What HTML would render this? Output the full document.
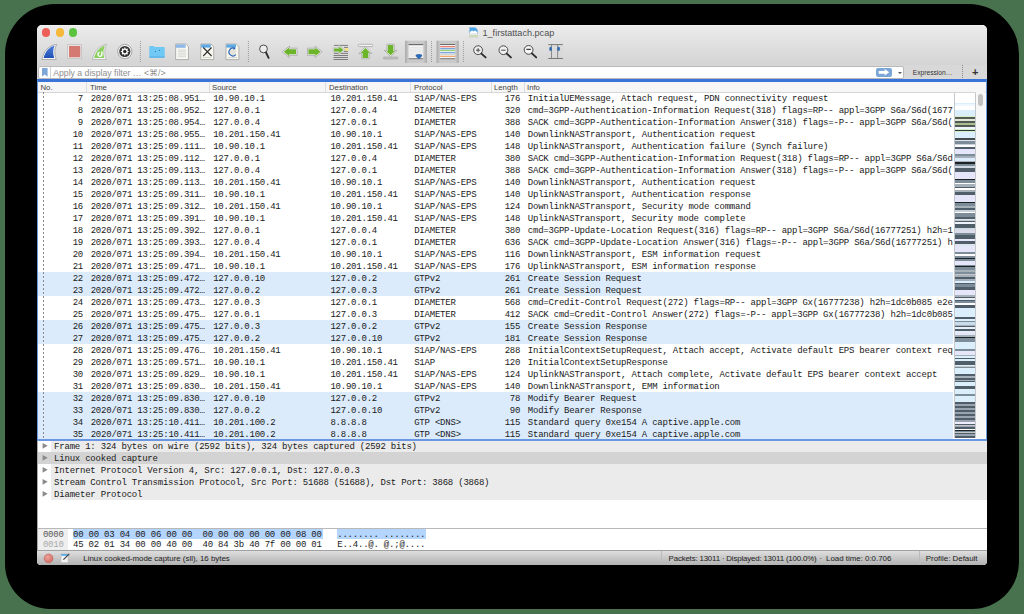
<!DOCTYPE html>
<html><head><meta charset="utf-8"><style>
*{margin:0;padding:0;box-sizing:border-box}
html,body{width:1024px;height:614px;overflow:hidden;background:#48724e;font-family:"Liberation Sans",sans-serif}
#shadow{position:absolute;left:4.6px;top:4px;width:1014px;height:605px;background:#000;border-radius:50px 50px 47px 45px}
#win{position:absolute;left:37px;top:25px;width:950px;height:540px;background:#fff;border-radius:5px 5px 4px 4px;overflow:hidden}
#titlebar{position:absolute;left:0;top:0;width:950px;height:41px;background:linear-gradient(#ebebeb,#d4d4d4);border-bottom:1px solid #b5b5b5;border-top:1px solid #f3f3f3}
.tl{position:absolute;top:3.4px;width:8.2px;height:8.2px;border-radius:50%}
#title{position:absolute;left:432px;top:1px;height:14px;font-size:9.1px;line-height:14px;color:#505050;white-space:nowrap}
.ficon{display:inline-block;width:8px;height:10px;vertical-align:-2px;margin-right:5px;background:linear-gradient(#58a8e8 0,#58a8e8 55%,#dcdcdc 55%,#dcdcdc 100%);border:1px solid #c8c8c8}
#filterbar{position:absolute;left:0;top:40px;width:950px;height:14px;background:#d8d8d8}
#finput{position:absolute;left:1px;top:41px;width:866px;height:12.5px;background:#fff;border:1px solid #b9b9b9;border-radius:2px}
#bm{position:absolute;left:2.8px;top:0.8px;width:5.8px;height:9px;background:#7ea7d8;clip-path:polygon(0 0,100% 0,100% 100%,50% 75%,0 100%)}
#fsep{position:absolute;left:11.2px;top:0;width:1px;height:10.5px;background:#d0d0d0}
#ph{position:absolute;left:14.2px;top:-0.3px;font-size:8.7px;line-height:12px;color:#8e8e8e;white-space:nowrap}
#apply{position:absolute;left:837px;top:0.8px;width:15.6px;height:9px;background:#7aa6d8;border-radius:2px}
#apply svg{position:absolute;left:0;top:0}
#dd{position:absolute;left:859px;top:4.5px;width:0;height:0;border-left:2.5px solid transparent;border-right:2.5px solid transparent;border-top:2.5px solid #555}
#expr{position:absolute;left:875.7px;top:42px;font-size:6.7px;line-height:11px;color:#333;white-space:nowrap}
#exsep{position:absolute;left:925px;top:40px;width:1px;height:13px;border-left:1px dotted #888}
#plus{position:absolute;left:935px;top:40px;font-size:11px;line-height:14px;font-weight:bold;color:#333}
#focus{position:absolute;left:0;top:54px;width:950px;height:362px;border:solid #6a96e2;border-top-color:#3b74d8;border-width:3px 1.5px 2px 1.5px;pointer-events:none;z-index:5}
#plist{position:absolute;left:0;top:54px;width:950px;height:362px;background:#fff}
#phead{position:absolute;left:0;top:3px;width:950px;height:11px;background:#f6f6f6;border-bottom:1px solid #d6d6d6}
.h{position:absolute;top:0.5px;font-size:7.75px;line-height:10px;color:#444;white-space:nowrap}
.hs{position:absolute;top:0;width:1px;height:10px;background:#dedede}
#rows{position:absolute;left:0;top:67px;width:916px;height:348px;overflow:hidden}
.r{position:absolute;left:0;width:916px;height:12px;font-family:"Liberation Mono",monospace;font-size:9px;letter-spacing:-0.22px;line-height:14px;color:#1a1a1a;white-space:pre}
.r.b{background:#dbebfb}
.r span{position:absolute;top:0}
.cno{right:870px;text-align:right}
.ct{left:53.7px}
.cs{left:176.2px}
.cd{left:293.4px}
.cp{left:377.2px}
.cl{right:432.8px;text-align:right}
.ci{left:490.8px}
#treeline{position:absolute;left:6px;top:67px;width:1px;height:348px;background:repeating-linear-gradient(#8a8a8a 0,#8a8a8a 2px,transparent 2px,transparent 4px)}
#mm{position:absolute;left:916.5px;top:68px;width:22px;height:345px;background:#c4c8cc;overflow:hidden}
#sbar{position:absolute;left:939px;top:67px;width:9px;height:348px;background:#f7f7f7}
#thumb{position:absolute;left:2px;top:1.5px;width:5px;height:12px;background:#c2c2c2;border-radius:3px}
#details{position:absolute;left:0;top:415px;width:950px;height:88px;background:#fff;border-left:1px solid #aaa}
.dr{position:absolute;left:0;width:950px;height:12px;background:linear-gradient(90deg,#fff 0,#fff 13px,#ebebeb 13px)}
.dr.sel{background:#d3d3d3}
.tri{position:absolute;left:0;top:0;width:14px;height:12px}
.dt{position:absolute;left:16.1px;top:0.7px;font-family:"Liberation Mono",monospace;font-size:9px;letter-spacing:-0.22px;line-height:12px;color:#1a1a1a;white-space:pre}
#hexsep{position:absolute;left:0;top:502.8px;width:950px;height:1.2px;background:#b8b8b8}
#hex{position:absolute;left:0;top:503.5px;width:950px;height:21.5px;background:#fff;border-left:1px solid #aaa}
#hexoff{position:absolute;left:0;top:0;width:30px;height:21.5px;background:#efefef}
.hx{position:absolute;left:0;height:10px;width:950px;font-family:"Liberation Mono",monospace;font-size:9px;letter-spacing:-0.22px;line-height:10px;color:#1a1a1a;white-space:pre}
.off{position:absolute;left:4.9px;top:0;color:#5a5a5a}
.hb{position:absolute;left:35px;top:0}
.hl{position:absolute;top:0.6px;height:9.7px;background:#b4d5fe}
#status{position:absolute;left:0;top:525px;width:950px;height:15px;background:linear-gradient(#dedede,#b2b2b2);border-top:1px solid #a0a0a0}
#serr{position:absolute;left:7px;top:3px;width:9px;height:9px;border-radius:50%;background:#e06060;border:1px solid #b04040}
#sedit{position:absolute;left:24px;top:2px;width:9px;height:10px;background:#fff;border:1px solid #999}
.st{position:absolute;top:0.8px;font-size:7.9px;line-height:14px;color:#222;white-space:nowrap}
.ssep{position:absolute;top:0;width:1px;height:14px;background:#bbb}

</style></head><body>
<div id="shadow"></div>
<div id="win">
<div id="titlebar"></div>
<div class="tl" style="left:5.3px;background:#ed5f57"></div>
<div class="tl" style="left:18.9px;background:#f5b83a"></div>
<div class="tl" style="left:32.2px;background:#5bc33f"></div>
<div id="title"><svg width="9" height="11" viewBox="0 0 9 11" style="vertical-align:-2px;margin-right:4.5px"><path d="M0.3,0.3 H6.3 L8.7,2.7 V10.7 H0.3Z" fill="#e8e8e8" stroke="#c4c4c4" stroke-width="0.5"/><path d="M0.5,0.5 H6.2 L8.5,2.8 V6 H0.5Z" fill="#4ea6ea"/><path d="M1,5 L3,3.4 L4.5,4.6 L6,3.6 L8,5 V6 H1Z" fill="#fff"/><rect x="0.5" y="8.6" width="8" height="0.8" fill="#9ccc6a"/></svg>1_firstattach.pcap</div>
<svg id="tb" width="1024" height="614" viewBox="0 0 1024 614" style="position:absolute;left:-37px;top:-25px;pointer-events:none">
<defs>
<linearGradient id="gblue" x1="0" y1="0" x2="0" y2="1"><stop offset="0" stop-color="#4f7fdc"/><stop offset="1" stop-color="#1f4fb5"/></linearGradient>
<linearGradient id="gbtn" x1="0" y1="0" x2="1" y2="0"><stop offset="0" stop-color="#a9a9a9"/><stop offset="0.15" stop-color="#c9c9c9"/><stop offset="0.85" stop-color="#c9c9c9"/><stop offset="1" stop-color="#a9a9a9"/></linearGradient>
</defs>
<!-- shark fin start -->
<path d="M41.9,59.5 C43.5,51 48.5,45.5 56.8,44.2 C54.3,49 54.2,54 56.3,59.5 Z" fill="#f4f4f4" stroke="#a0a0a0" stroke-width="0.8"/>
<path d="M43.6,58 C45.5,51 49.5,47 54.6,45.6 C52.8,49.5 52.7,54 54.2,58 Z" fill="url(#gblue)"/>
<!-- stop -->
<rect x="67.6" y="44.6" width="14" height="14" fill="#ececec" stroke="#c0c0c0" stroke-width="0.8"/>
<rect x="69" y="45.9" width="11.3" height="11.4" fill="#d57a72"/>
<!-- restart fin -->
<path d="M92.4,59.5 C94,51 99,45.7 106.6,44.4 C104.3,49 104.2,54 106.3,59.5 Z" fill="#f4f4f4" stroke="#b0b0b0" stroke-width="0.8"/>
<path d="M94,58 C96,51 100,47 104.9,45.8 C103,49.5 103,54 104.3,58 Z" fill="#8ccf5e"/>
<path d="M101.8,51.5 v3.5 a2,2 0 1 1 -2.2,-2.6" fill="none" stroke="#fff" stroke-width="1.4"/>
<!-- options gear -->
<circle cx="124.8" cy="51.5" r="7.1" fill="#f6f6f6" stroke="#8a8a8a" stroke-width="0.7"/>
<circle cx="124.8" cy="51.5" r="5.6" fill="#333"/>
<circle cx="124.8" cy="51.5" r="3" fill="#fff"/>
<g stroke="#fff" stroke-width="1.1"><path d="M124.8,47.6 V55.4 M120.9,51.5 H128.7"/><path d="M122.05,48.75 L127.55,54.25 M127.55,48.75 L122.05,54.25"/></g>
<circle cx="124.8" cy="51.5" r="1.7" fill="#2a2a2a"/>
<!-- separators -->
<g stroke="#8a8a8a" stroke-width="0.9" stroke-dasharray="0.9 1.1">
<line x1="140.4" y1="41" x2="140.4" y2="62"/><line x1="248.4" y1="41" x2="248.4" y2="62"/>
<line x1="431.5" y1="41" x2="431.5" y2="62"/><line x1="463.4" y1="41" x2="463.4" y2="62"/>
</g>
<!-- open folder -->
<path d="M149.3,47 v-0.3 a0.8,0.8 0 0 1 0.8,-0.8 h3.6 l0.8,1.1 h9.4 a0.8,0.8 0 0 1 0.8,0.8 v9.2 a0.7,0.7 0 0 1 -0.7,0.7 h-14 a0.7,0.7 0 0 1 -0.7,-0.7 z" fill="#70c8f4"/>
<path d="M149.3,56.3 h15.3 v0.8 a0.7,0.7 0 0 1 -0.7,0.7 h-14 a0.7,0.7 0 0 1 -0.7,-0.7z" fill="#5cb5e8"/>
<circle cx="155.4" cy="51.4" r="0.6" fill="#3a7ab0"/><circle cx="159.4" cy="50.4" r="0.6" fill="#3a7ab0"/>
<!-- doc (open recent/save) -->
<path d="M175.6,44 h10.2 l2.7,2.7 v12.9 h-12.9 z" fill="#f7f7f2" stroke="#9a9a9a" stroke-width="0.7"/>
<rect x="176" y="44.4" width="9.6" height="3.4" fill="#8fb8e8"/>
<g stroke="#c4c4c4" stroke-width="0.6"><line x1="178" y1="50" x2="186" y2="50"/><line x1="178" y1="51.5" x2="186" y2="51.5"/><line x1="178" y1="53.4" x2="186" y2="53.4"/><line x1="178" y1="55" x2="186" y2="55"/><line x1="178" y1="56.6" x2="186" y2="56.6"/></g>
<!-- close doc -->
<path d="M200.8,44 h10.2 l2.7,2.7 v12.9 h-12.9 z" fill="#f7f7ee" stroke="#9a9a9a" stroke-width="0.7"/>
<rect x="201.2" y="44.4" width="9.6" height="3.2" fill="#5aa8e4"/>
<g stroke="#bbb" stroke-width="0.6"><line x1="203" y1="57.5" x2="211" y2="57.5"/></g>
<path d="M203.2,47.5 L211.6,56 M211.6,47.5 L203.2,56" stroke="#2e2e2e" stroke-width="1.1"/>
<!-- reload doc -->
<path d="M226,44 h10.2 l2.7,2.7 v12.9 h-12.9 z" fill="#f7f7ee" stroke="#9a9a9a" stroke-width="0.7"/>
<rect x="226.4" y="44.4" width="9.6" height="3.2" fill="#5aa8e4"/>
<g stroke="#bbb" stroke-width="0.6"><line x1="228" y1="57.5" x2="237" y2="57.5"/><line x1="231" y1="49.5" x2="231" y2="55"/><line x1="233" y1="49.5" x2="233" y2="55"/><line x1="235" y1="49.5" x2="235" y2="55"/></g>
<path d="M235.8,54.6 A3.9,3.9 0 1 1 234.5,48.4" fill="none" stroke="#2a62b0" stroke-width="1.2"/>
<path d="M233.2,47 l2.5,1.2 -2.1,1.8z" fill="#2a62b0"/>
<!-- find -->
<circle cx="263.5" cy="48.9" r="3.9" fill="#ededed" stroke="#3a3a3a" stroke-width="0.9"/>
<line x1="266" y1="52.5" x2="268.6" y2="57.8" stroke="#2e2e2e" stroke-width="1.9" stroke-linecap="round"/>
<!-- back arrow -->
<path d="M282.2,51.8 L289.4,46 V48.2 H297 V55.3 H289.4 V57.6 Z" fill="#f4f4f4" stroke="#a0a0a0" stroke-width="0.75"/>
<path d="M283.8,51.8 L289,47.6 V49.2 H296 V54.3 H289 V56 Z" fill="#6cb42a"/>
<!-- forward arrow -->
<path d="M322.2,51.8 L315,46 V48.2 H307.4 V55.3 H315 V57.6 Z" fill="#f4f4f4" stroke="#a0a0a0" stroke-width="0.75"/>
<path d="M320.6,51.8 L315.4,47.6 V49.2 H308.4 V54.3 H315.4 V56 Z" fill="#6cb42a"/>
<!-- jump to -->
<g stroke="#4a4a4a" stroke-width="0.65"><line x1="334" y1="45.4" x2="348" y2="45.4"/><line x1="344" y1="47.4" x2="348" y2="47.4"/><line x1="344" y1="51.4" x2="348" y2="51.4"/><line x1="334" y1="53.4" x2="348" y2="53.4"/><line x1="333.5" y1="55.5" x2="348" y2="55.5"/><line x1="333.5" y1="57.5" x2="348" y2="57.5"/><line x1="333.5" y1="59.5" x2="348" y2="59.5"/></g>
<rect x="345" y="48.2" width="3.2" height="2.6" fill="#f8e27a"/>
<path d="M333.2,47.8 H338.5 V44.8 L344.6,50 L338.5,55.2 V52.2 H333.2 Z" fill="#f4f4f4" stroke="#a8a8a8" stroke-width="0.6"/><path d="M334,48.6 H339.2 V46.6 L343.4,50 L339.2,53.4 V51.4 H334 Z" fill="#6cb42a"/>
<!-- first packet -->
<rect x="358.3" y="44.3" width="14.4" height="2.3" rx="1.1" fill="#f6f6f6" stroke="#9a9a9a" stroke-width="0.7"/>
<path d="M365.4,46.6 L372,53.6 H369.2 V58.8 H361.7 V53.6 H358.9 Z" fill="#f4f4f4" stroke="#9c9c9c" stroke-width="0.7"/>
<path d="M365.4,47.9 L370.2,53 H368.3 V58 H362.6 V53 H360.7 Z" fill="#6cb42a"/>
<!-- last packet -->
<path d="M386.9,44.2 H394.2 V50.4 H396.9 L390.6,56.6 L384.3,50.4 H386.9 Z" fill="#f4f4f4" stroke="#9c9c9c" stroke-width="0.7"/>
<path d="M387.8,45 H393.3 V51 H395 L390.6,55.3 L386.2,51 H387.8 Z" fill="#6cb42a"/>
<rect x="383.4" y="57.1" width="14.6" height="1.9" rx="0.9" fill="#c8c8c8" stroke="#9a9a9a" stroke-width="0.6"/>
<!-- autoscroll pressed -->
<rect x="405" y="40.7" width="22" height="22.2" fill="url(#gbtn)"/>
<rect x="408.6" y="45.5" width="14.6" height="13" fill="#f2f2f2"/>
<g stroke="#d8d8d8" stroke-width="0.6"><line x1="409" y1="47.8" x2="423" y2="47.8"/><line x1="409" y1="50" x2="423" y2="50"/><line x1="409" y1="52" x2="423" y2="52"/><line x1="409" y1="54.2" x2="423" y2="54.2"/><line x1="409" y1="56.2" x2="423" y2="56.2"/></g>
<rect x="408.6" y="44" width="14.6" height="1" fill="#6a6a6a"/>
<rect x="408.6" y="58.2" width="14.6" height="1" fill="#7a7a7a"/>
<path d="M415.6,55.8 a3.3,1.8 0 0 1 6.6,0 l-1.4,1.6 -1.9,1.9 -1.9,-1.9z" fill="#2e6bb4"/>
<!-- colorize pressed -->
<rect x="436.5" y="40.7" width="22.3" height="22.2" fill="url(#gbtn)"/>
<rect x="440.2" y="45" width="14.9" height="13.5" fill="#f4f4f4"/>
<rect x="440.2" y="44" width="14.9" height="1" fill="#6a6a6a"/>
<rect x="440.2" y="46" width="14.9" height="1.3" fill="#e77f70"/>
<rect x="440.2" y="48" width="14.9" height="1.3" fill="#7aa6e0"/>
<rect x="440.2" y="49.8" width="14.9" height="1.3" fill="#92d07a"/>
<rect x="440.2" y="52" width="14.9" height="1.3" fill="#7aa6e0"/>
<rect x="440.2" y="53.8" width="14.9" height="1" fill="#cfcfcf"/>
<rect x="440.2" y="55.7" width="14.9" height="1.3" fill="#f0aa70"/>
<rect x="440.2" y="58.2" width="14.9" height="1" fill="#7a7a7a"/>
<!-- zoom in -->
<circle cx="478.1" cy="50.2" r="4.4" fill="#efefef" stroke="#3a3a3a" stroke-width="0.9"/>
<path d="M476,50.2 h4.2 M478.1,48.1 v4.2" stroke="#3a3a3a" stroke-width="0.9"/>
<line x1="481.4" y1="53.6" x2="485.6" y2="57.4" stroke="#2a2a2a" stroke-width="1.9" stroke-linecap="round"/>
<!-- zoom out -->
<circle cx="503.4" cy="50.2" r="4.4" fill="#efefef" stroke="#3a3a3a" stroke-width="0.9"/>
<path d="M501.2,50.2 h4.4" stroke="#3a3a3a" stroke-width="0.9"/>
<line x1="506.7" y1="53.6" x2="510.9" y2="57.4" stroke="#2a2a2a" stroke-width="1.9" stroke-linecap="round"/>
<!-- zoom normal -->
<circle cx="528.6" cy="49.9" r="4.4" fill="#efefef" stroke="#3a3a3a" stroke-width="0.9"/>
<circle cx="528.6" cy="49.9" r="3" fill="#fafafa"/>
<path d="M526.4,49.4 h4.4" stroke="#3a3a3a" stroke-width="1.4"/>
<line x1="531.9" y1="53.4" x2="536.2" y2="57.4" stroke="#2a2a2a" stroke-width="1.9" stroke-linecap="round"/>
<!-- resize columns -->
<g stroke="#d4d4d4" stroke-width="0.6"><line x1="548.5" y1="46.5" x2="562.6" y2="46.5"/><line x1="548.5" y1="48.6" x2="562.6" y2="48.6"/><line x1="548.5" y1="50.6" x2="562.6" y2="50.6"/><line x1="548.5" y1="52.6" x2="562.6" y2="52.6"/><line x1="548.5" y1="54.6" x2="562.6" y2="54.6"/><line x1="548.5" y1="56.6" x2="562.6" y2="56.6"/></g>
<rect x="548.3" y="44.1" width="14.6" height="1" fill="#777"/>
<rect x="548.3" y="58" width="14.6" height="1" fill="#777"/>
<rect x="551.2" y="44.5" width="0.8" height="14" fill="#777"/>
<rect x="557.3" y="44.5" width="0.8" height="14" fill="#777"/>
<ellipse cx="550.6" cy="48.9" rx="1.35" ry="2.1" fill="#2e6bb4"/><ellipse cx="558.6" cy="48.9" rx="1.35" ry="2.1" fill="#2e6bb4"/>
</svg>

<div id="filterbar"></div>
<div id="finput"><div id="bm"></div><div id="fsep"></div><span id="ph">Apply a display filter … &lt;⌘/&gt;</span>
<div id="apply"><svg width="16" height="9" viewBox="0 0 16 9"><path d="M2.7,2.9 H8.6 V1.1 L13.2,4.3 L8.6,7.5 V5.8 H2.7z" fill="#fff"/></svg></div><div id="dd"></div></div>
<div id="expr">Expression…</div><div id="exsep"></div><div id="plus">+</div>
<div id="plist">
<div id="phead"><span class="h" style="left:3.5px">No.</span><span class="hs" style="left:49px"></span><span class="h" style="left:53px">Time</span><span class="hs" style="left:172px"></span><span class="h" style="left:175px">Source</span><span class="hs" style="left:288px"></span><span class="h" style="left:292px">Destination</span><span class="hs" style="left:373px"></span><span class="h" style="left:377px">Protocol</span><span class="hs" style="left:454px"></span><span class="h" style="left:457px">Length</span><span class="hs" style="left:487px"></span><span class="h" style="left:490px">Info</span></div>
</div>
<div id="rows">
<div class="r" style="top:0px"><span class="cno">7</span><span class="ct">2020/071 13:25:08.951…</span><span class="cs">10.90.10.1</span><span class="cd">10.201.150.41</span><span class="cp">S1AP/NAS-EPS</span><span class="cl">176</span><span class="ci">InitialUEMessage, Attach request, PDN connectivity request</span></div><div class="r" style="top:12px"><span class="cno">8</span><span class="ct">2020/071 13:25:08.952…</span><span class="cs">127.0.0.1</span><span class="cd">127.0.0.4</span><span class="cp">DIAMETER</span><span class="cl">320</span><span class="ci">cmd=3GPP-Authentication-Information Request(318) flags=RP-- appl=3GPP S6a/S6d(16777251) h2h=</span></div><div class="r" style="top:24px"><span class="cno">9</span><span class="ct">2020/071 13:25:08.954…</span><span class="cs">127.0.0.4</span><span class="cd">127.0.0.1</span><span class="cp">DIAMETER</span><span class="cl">388</span><span class="ci">SACK cmd=3GPP-Authentication-Information Answer(318) flags=-P-- appl=3GPP S6a/S6d(16777251)</span></div><div class="r" style="top:36px"><span class="cno">10</span><span class="ct">2020/071 13:25:08.955…</span><span class="cs">10.201.150.41</span><span class="cd">10.90.10.1</span><span class="cp">S1AP/NAS-EPS</span><span class="cl">140</span><span class="ci">DownlinkNASTransport, Authentication request</span></div><div class="r" style="top:48px"><span class="cno">11</span><span class="ct">2020/071 13:25:09.111…</span><span class="cs">10.90.10.1</span><span class="cd">10.201.150.41</span><span class="cp">S1AP/NAS-EPS</span><span class="cl">148</span><span class="ci">UplinkNASTransport, Authentication failure (Synch failure)</span></div><div class="r" style="top:60px"><span class="cno">12</span><span class="ct">2020/071 13:25:09.112…</span><span class="cs">127.0.0.1</span><span class="cd">127.0.0.4</span><span class="cp">DIAMETER</span><span class="cl">380</span><span class="ci">SACK cmd=3GPP-Authentication-Information Request(318) flags=RP-- appl=3GPP S6a/S6d(16777251)</span></div><div class="r" style="top:72px"><span class="cno">13</span><span class="ct">2020/071 13:25:09.113…</span><span class="cs">127.0.0.4</span><span class="cd">127.0.0.1</span><span class="cp">DIAMETER</span><span class="cl">388</span><span class="ci">SACK cmd=3GPP-Authentication-Information Answer(318) flags=-P-- appl=3GPP S6a/S6d(16777251)</span></div><div class="r" style="top:84px"><span class="cno">14</span><span class="ct">2020/071 13:25:09.113…</span><span class="cs">10.201.150.41</span><span class="cd">10.90.10.1</span><span class="cp">S1AP/NAS-EPS</span><span class="cl">140</span><span class="ci">DownlinkNASTransport, Authentication request</span></div><div class="r" style="top:96px"><span class="cno">15</span><span class="ct">2020/071 13:25:09.311…</span><span class="cs">10.90.10.1</span><span class="cd">10.201.150.41</span><span class="cp">S1AP/NAS-EPS</span><span class="cl">140</span><span class="ci">UplinkNASTransport, Authentication response</span></div><div class="r" style="top:108px"><span class="cno">16</span><span class="ct">2020/071 13:25:09.312…</span><span class="cs">10.201.150.41</span><span class="cd">10.90.10.1</span><span class="cp">S1AP/NAS-EPS</span><span class="cl">124</span><span class="ci">DownlinkNASTransport, Security mode command</span></div><div class="r" style="top:120px"><span class="cno">17</span><span class="ct">2020/071 13:25:09.391…</span><span class="cs">10.90.10.1</span><span class="cd">10.201.150.41</span><span class="cp">S1AP/NAS-EPS</span><span class="cl">148</span><span class="ci">UplinkNASTransport, Security mode complete</span></div><div class="r" style="top:132px"><span class="cno">18</span><span class="ct">2020/071 13:25:09.392…</span><span class="cs">127.0.0.1</span><span class="cd">127.0.0.4</span><span class="cp">DIAMETER</span><span class="cl">380</span><span class="ci">cmd=3GPP-Update-Location Request(316) flags=RP-- appl=3GPP S6a/S6d(16777251) h2h=1dc0b085</span></div><div class="r" style="top:144px"><span class="cno">19</span><span class="ct">2020/071 13:25:09.393…</span><span class="cs">127.0.0.4</span><span class="cd">127.0.0.1</span><span class="cp">DIAMETER</span><span class="cl">636</span><span class="ci">SACK cmd=3GPP-Update-Location Answer(316) flags=-P-- appl=3GPP S6a/S6d(16777251) h2h=1dc0b085</span></div><div class="r" style="top:156px"><span class="cno">20</span><span class="ct">2020/071 13:25:09.394…</span><span class="cs">10.201.150.41</span><span class="cd">10.90.10.1</span><span class="cp">S1AP/NAS-EPS</span><span class="cl">116</span><span class="ci">DownlinkNASTransport, ESM information request</span></div><div class="r" style="top:168px"><span class="cno">21</span><span class="ct">2020/071 13:25:09.471…</span><span class="cs">10.90.10.1</span><span class="cd">10.201.150.41</span><span class="cp">S1AP/NAS-EPS</span><span class="cl">176</span><span class="ci">UplinkNASTransport, ESM information response</span></div><div class="r b" style="top:180px"><span class="cno">22</span><span class="ct">2020/071 13:25:09.472…</span><span class="cs">127.0.0.10</span><span class="cd">127.0.0.2</span><span class="cp">GTPv2</span><span class="cl">261</span><span class="ci">Create Session Request</span></div><div class="r b" style="top:192px"><span class="cno">23</span><span class="ct">2020/071 13:25:09.472…</span><span class="cs">127.0.0.2</span><span class="cd">127.0.0.3</span><span class="cp">GTPv2</span><span class="cl">261</span><span class="ci">Create Session Request</span></div><div class="r" style="top:204px"><span class="cno">24</span><span class="ct">2020/071 13:25:09.473…</span><span class="cs">127.0.0.3</span><span class="cd">127.0.0.1</span><span class="cp">DIAMETER</span><span class="cl">568</span><span class="ci">cmd=Credit-Control Request(272) flags=RP-- appl=3GPP Gx(16777238) h2h=1dc0b085 e2e=</span></div><div class="r" style="top:216px"><span class="cno">25</span><span class="ct">2020/071 13:25:09.475…</span><span class="cs">127.0.0.1</span><span class="cd">127.0.0.3</span><span class="cp">DIAMETER</span><span class="cl">412</span><span class="ci">SACK cmd=Credit-Control Answer(272) flags=-P-- appl=3GPP Gx(16777238) h2h=1dc0b085 e2e=</span></div><div class="r b" style="top:228px"><span class="cno">26</span><span class="ct">2020/071 13:25:09.475…</span><span class="cs">127.0.0.3</span><span class="cd">127.0.0.2</span><span class="cp">GTPv2</span><span class="cl">155</span><span class="ci">Create Session Response</span></div><div class="r b" style="top:240px"><span class="cno">27</span><span class="ct">2020/071 13:25:09.475…</span><span class="cs">127.0.0.2</span><span class="cd">127.0.0.10</span><span class="cp">GTPv2</span><span class="cl">181</span><span class="ci">Create Session Response</span></div><div class="r" style="top:252px"><span class="cno">28</span><span class="ct">2020/071 13:25:09.476…</span><span class="cs">10.201.150.41</span><span class="cd">10.90.10.1</span><span class="cp">S1AP/NAS-EPS</span><span class="cl">288</span><span class="ci">InitialContextSetupRequest, Attach accept, Activate default EPS bearer context request</span></div><div class="r" style="top:264px"><span class="cno">29</span><span class="ct">2020/071 13:25:09.571…</span><span class="cs">10.90.10.1</span><span class="cd">10.201.150.41</span><span class="cp">S1AP</span><span class="cl">120</span><span class="ci">InitialContextSetupResponse</span></div><div class="r" style="top:276px"><span class="cno">30</span><span class="ct">2020/071 13:25:09.829…</span><span class="cs">10.90.10.1</span><span class="cd">10.201.150.41</span><span class="cp">S1AP/NAS-EPS</span><span class="cl">124</span><span class="ci">UplinkNASTransport, Attach complete, Activate default EPS bearer context accept</span></div><div class="r" style="top:288px"><span class="cno">31</span><span class="ct">2020/071 13:25:09.830…</span><span class="cs">10.201.150.41</span><span class="cd">10.90.10.1</span><span class="cp">S1AP/NAS-EPS</span><span class="cl">140</span><span class="ci">DownlinkNASTransport, EMM information</span></div><div class="r b" style="top:300px"><span class="cno">32</span><span class="ct">2020/071 13:25:09.830…</span><span class="cs">127.0.0.10</span><span class="cd">127.0.0.2</span><span class="cp">GTPv2</span><span class="cl">78</span><span class="ci">Modify Bearer Request</span></div><div class="r b" style="top:312px"><span class="cno">33</span><span class="ct">2020/071 13:25:09.830…</span><span class="cs">127.0.0.2</span><span class="cd">127.0.0.10</span><span class="cp">GTPv2</span><span class="cl">90</span><span class="ci">Modify Bearer Response</span></div><div class="r b" style="top:324px"><span class="cno">34</span><span class="ct">2020/071 13:25:10.411…</span><span class="cs">10.201.100.2</span><span class="cd">8.8.8.8</span><span class="cp">GTP &lt;DNS&gt;</span><span class="cl">115</span><span class="ci">Standard query 0xe154 A captive.apple.com</span></div><div class="r b" style="top:336px"><span class="cno">35</span><span class="ct">2020/071 13:25:10.411…</span><span class="cs">10.201.100.2</span><span class="cd">8.8.8.8</span><span class="cp">GTP &lt;DNS&gt;</span><span class="cl">115</span><span class="ci">Standard query 0xe154 A captive.apple.com</span></div>
</div>
<div id="treeline"></div>
<div id="mm"><div style="position:absolute;left:1px;width:20px;top:0.0px;height:9.7px;background:#ffffff"></div><div style="position:absolute;left:1px;width:20px;top:9.7px;height:1.0px;background:#daeefc"></div><div style="position:absolute;left:1px;width:20px;top:10.7px;height:2.3px;background:#eef6fe"></div><div style="position:absolute;left:1px;width:20px;top:13.0px;height:3.5px;background:#ffffff"></div><div style="position:absolute;left:1px;width:20px;top:16.5px;height:6.9px;background:#daeefc"></div><div style="position:absolute;left:1px;width:20px;top:23.4px;height:1.0px;background:#d8ecc8"></div><div style="position:absolute;left:1px;width:20px;top:24.4px;height:1.4px;background:#555a55"></div><div style="position:absolute;left:1px;width:20px;top:25.8px;height:2.0px;background:#e0e8d8"></div><div style="position:absolute;left:1px;width:20px;top:27.8px;height:1.9px;background:#555a55"></div><div style="position:absolute;left:1px;width:20px;top:29.7px;height:2.5px;background:#a9bf92"></div><div style="position:absolute;left:1px;width:20px;top:32.2px;height:1.5px;background:#555a55"></div><div style="position:absolute;left:1px;width:20px;top:33.7px;height:1.9px;background:#eef6fe"></div><div style="position:absolute;left:1px;width:20px;top:35.6px;height:1.0px;background:#d8ecc8"></div><div style="position:absolute;left:1px;width:20px;top:36.6px;height:1.4px;background:#2c3a3a"></div><div style="position:absolute;left:1px;width:20px;top:38.0px;height:1.0px;background:#d8ecc8"></div><div style="position:absolute;left:1px;width:20px;top:39.0px;height:5.9px;background:#daeefc"></div><div style="position:absolute;left:1px;width:20px;top:44.9px;height:2.0px;background:#444c50"></div><div style="position:absolute;left:1px;width:20px;top:46.9px;height:0.9px;background:#dde6ee"></div><div style="position:absolute;left:1px;width:20px;top:47.8px;height:3.0px;background:#7d8c99"></div><div style="position:absolute;left:1px;width:20px;top:50.8px;height:1.2px;background:#c8d2da"></div><div style="position:absolute;left:1px;width:20px;top:52.0px;height:1.7px;background:#ffffff"></div><div style="position:absolute;left:1px;width:20px;top:53.7px;height:2.7px;background:#4f5e69"></div><div style="position:absolute;left:1px;width:20px;top:56.4px;height:4.4px;background:#e6e6fa"></div><div style="position:absolute;left:1px;width:20px;top:60.8px;height:2.0px;background:#7d8c99"></div><div style="position:absolute;left:1px;width:20px;top:62.8px;height:1.9px;background:#a6b0b8"></div><div style="position:absolute;left:1px;width:20px;top:64.7px;height:2.9px;background:#dcecfa"></div><div style="position:absolute;left:1px;width:20px;top:67.6px;height:1.5px;background:#a6b0b8"></div><div style="position:absolute;left:1px;width:20px;top:69.1px;height:1.9px;background:#1c2226"></div><div style="position:absolute;left:1px;width:20px;top:71.0px;height:2.0px;background:#7d8c99"></div><div style="position:absolute;left:1px;width:20px;top:73.0px;height:1.5px;background:#d0dae2"></div><div style="position:absolute;left:1px;width:20px;top:74.5px;height:4.4px;background:#4f5e69"></div><div style="position:absolute;left:1px;width:20px;top:78.9px;height:6.8px;background:#e6e6fa"></div><div style="position:absolute;left:1px;width:20px;top:85.7px;height:1.5px;background:#1c2226"></div><div style="position:absolute;left:1px;width:20px;top:87.2px;height:2.9px;background:#7d8c99"></div><div style="position:absolute;left:1px;width:20px;top:90.1px;height:0.9px;background:#ffffff"></div><div style="position:absolute;left:1px;width:20px;top:91.0px;height:2.5px;background:#a6b0b8"></div><div style="position:absolute;left:1px;width:20px;top:93.5px;height:1.5px;background:#4f5e69"></div><div style="position:absolute;left:1px;width:20px;top:95.0px;height:2.0px;background:#ffffff"></div><div style="position:absolute;left:1px;width:20px;top:97.0px;height:2.0px;background:#a6b0b8"></div><div style="position:absolute;left:1px;width:20px;top:99.0px;height:3.0px;background:#4f5e69"></div><div style="position:absolute;left:1px;width:20px;top:102.0px;height:6.7px;background:#e6e6fa"></div><div style="position:absolute;left:1px;width:20px;top:108.7px;height:1.5px;background:#1c2226"></div><div style="position:absolute;left:1px;width:20px;top:110.2px;height:2.7px;background:#7d8c99"></div><div style="position:absolute;left:1px;width:20px;top:112.9px;height:1.9px;background:#a6b0b8"></div><div style="position:absolute;left:1px;width:20px;top:114.8px;height:2.0px;background:#4f5e69"></div><div style="position:absolute;left:1px;width:20px;top:116.8px;height:1.9px;background:#c8d2da"></div><div style="position:absolute;left:1px;width:20px;top:118.7px;height:1.5px;background:#ffffff"></div><div style="position:absolute;left:1px;width:20px;top:120.2px;height:3.4px;background:#7d8c99"></div><div style="position:absolute;left:1px;width:20px;top:123.6px;height:2.0px;background:#4f5e69"></div><div style="position:absolute;left:1px;width:20px;top:125.6px;height:1.9px;background:#d8e2ea"></div><div style="position:absolute;left:1px;width:20px;top:127.5px;height:1.5px;background:#4f5e69"></div><div style="position:absolute;left:1px;width:20px;top:129.0px;height:2.0px;background:#eef2fa"></div><div style="position:absolute;left:1px;width:20px;top:131.0px;height:4.3px;background:#4f5e69"></div><div style="position:absolute;left:1px;width:20px;top:135.3px;height:2.0px;background:#d0dae2"></div><div style="position:absolute;left:1px;width:20px;top:137.3px;height:2.9px;background:#dcdcec"></div><div style="position:absolute;left:1px;width:20px;top:140.2px;height:1.5px;background:#7d8c99"></div><div style="position:absolute;left:1px;width:20px;top:141.7px;height:3.9px;background:#4f5e69"></div><div style="position:absolute;left:1px;width:20px;top:145.6px;height:2.4px;background:#e6e6fa"></div><div style="position:absolute;left:1px;width:20px;top:148.0px;height:3.0px;background:#4f5e69"></div><div style="position:absolute;left:1px;width:20px;top:151.0px;height:2.0px;background:#dde6ee"></div><div style="position:absolute;left:1px;width:20px;top:153.0px;height:5.8px;background:#e6e6fa"></div><div style="position:absolute;left:1px;width:20px;top:158.8px;height:2.0px;background:#7d8c99"></div><div style="position:absolute;left:1px;width:20px;top:160.8px;height:1.9px;background:#ffffff"></div><div style="position:absolute;left:1px;width:20px;top:162.7px;height:2.0px;background:#7d8c99"></div><div style="position:absolute;left:1px;width:20px;top:164.7px;height:1.7px;background:#1c2226"></div><div style="position:absolute;left:1px;width:20px;top:166.4px;height:1.5px;background:#7d8c99"></div><div style="position:absolute;left:1px;width:20px;top:167.9px;height:3.9px;background:#e6e6fa"></div><div style="position:absolute;left:1px;width:20px;top:171.8px;height:1.0px;background:#7d8c99"></div><div style="position:absolute;left:1px;width:20px;top:172.8px;height:1.4px;background:#1c2226"></div><div style="position:absolute;left:1px;width:20px;top:174.2px;height:2.5px;background:#7d8c99"></div><div style="position:absolute;left:1px;width:20px;top:176.7px;height:2.4px;background:#a6b0b8"></div><div style="position:absolute;left:1px;width:20px;top:179.1px;height:2.4px;background:#7d8c99"></div><div style="position:absolute;left:1px;width:20px;top:181.5px;height:2.0px;background:#a6b0b8"></div><div style="position:absolute;left:1px;width:20px;top:183.5px;height:2.5px;background:#4f5e69"></div><div style="position:absolute;left:1px;width:20px;top:186.0px;height:2.0px;background:#a6b0b8"></div><div style="position:absolute;left:1px;width:20px;top:188.0px;height:1.9px;background:#daeefc"></div><div style="position:absolute;left:1px;width:20px;top:189.9px;height:1.4px;background:#4f5e69"></div><div style="position:absolute;left:1px;width:20px;top:191.3px;height:3.0px;background:#7d8c99"></div><div style="position:absolute;left:1px;width:20px;top:194.3px;height:2.4px;background:#4f5e69"></div><div style="position:absolute;left:1px;width:20px;top:196.7px;height:5.3px;background:#e6e6fa"></div><div style="position:absolute;left:1px;width:20px;top:202.0px;height:1.5px;background:#a6b0b8"></div><div style="position:absolute;left:1px;width:20px;top:203.5px;height:1.5px;background:#4f5e69"></div><div style="position:absolute;left:1px;width:20px;top:205.0px;height:1.5px;background:#e6ecf4"></div><div style="position:absolute;left:1px;width:20px;top:206.5px;height:1.5px;background:#4f5e69"></div><div style="position:absolute;left:1px;width:20px;top:208.0px;height:1.9px;background:#7d8c99"></div><div style="position:absolute;left:1px;width:20px;top:209.9px;height:2.0px;background:#ffffff"></div><div style="position:absolute;left:1px;width:20px;top:211.9px;height:2.9px;background:#4f5e69"></div><div style="position:absolute;left:1px;width:20px;top:214.8px;height:9.0px;background:#daeefc"></div><div style="position:absolute;left:1px;width:20px;top:223.8px;height:2.0px;background:#4f5e69"></div><div style="position:absolute;left:1px;width:20px;top:225.8px;height:2.0px;background:#daeefc"></div><div style="position:absolute;left:1px;width:20px;top:227.8px;height:1.4px;background:#7d8c99"></div><div style="position:absolute;left:1px;width:20px;top:229.2px;height:2.5px;background:#c8dcec"></div><div style="position:absolute;left:1px;width:20px;top:231.7px;height:0.9px;background:#a6b0b8"></div><div style="position:absolute;left:1px;width:20px;top:232.6px;height:1.5px;background:#4f5e69"></div><div style="position:absolute;left:1px;width:20px;top:234.1px;height:1.9px;background:#e6f0fa"></div><div style="position:absolute;left:1px;width:20px;top:236.0px;height:2.0px;background:#4f5e69"></div><div style="position:absolute;left:1px;width:20px;top:238.0px;height:2.0px;background:#e6ecf6"></div><div style="position:absolute;left:1px;width:20px;top:240.0px;height:2.4px;background:#e6e6fa"></div><div style="position:absolute;left:1px;width:20px;top:242.4px;height:1.5px;background:#a6b0b8"></div><div style="position:absolute;left:1px;width:20px;top:243.9px;height:1.4px;background:#1c2226"></div><div style="position:absolute;left:1px;width:20px;top:245.3px;height:3.5px;background:#7d8c99"></div><div style="position:absolute;left:1px;width:20px;top:248.8px;height:7.3px;background:#daeefc"></div><div style="position:absolute;left:1px;width:20px;top:256.1px;height:1.5px;background:#7d8c99"></div><div style="position:absolute;left:1px;width:20px;top:257.6px;height:4.4px;background:#e6e6fa"></div><div style="position:absolute;left:1px;width:20px;top:262.0px;height:1.4px;background:#a6b0b8"></div><div style="position:absolute;left:1px;width:20px;top:263.4px;height:1.5px;background:#daeefc"></div><div style="position:absolute;left:1px;width:20px;top:264.9px;height:1.0px;background:#4f5e69"></div><div style="position:absolute;left:1px;width:20px;top:265.9px;height:2.4px;background:#daeefc"></div><div style="position:absolute;left:1px;width:20px;top:268.3px;height:3.4px;background:#4f5e69"></div><div style="position:absolute;left:1px;width:20px;top:271.7px;height:1.8px;background:#daeefc"></div><div style="position:absolute;left:1px;width:20px;top:273.5px;height:1.5px;background:#7d8c99"></div><div style="position:absolute;left:1px;width:20px;top:275.0px;height:6.3px;background:#daeefc"></div><div style="position:absolute;left:1px;width:20px;top:281.3px;height:1.7px;background:#4f5e69"></div><div style="position:absolute;left:1px;width:20px;top:283.0px;height:1.5px;background:#a6b0b8"></div><div style="position:absolute;left:1px;width:20px;top:284.5px;height:2.0px;background:#4f5e69"></div><div style="position:absolute;left:1px;width:20px;top:286.5px;height:1.0px;background:#a6b0b8"></div><div style="position:absolute;left:1px;width:20px;top:287.5px;height:1.1px;background:#4f5e69"></div><div style="position:absolute;left:1px;width:20px;top:288.6px;height:4.4px;background:#daeefc"></div><div style="position:absolute;left:1px;width:20px;top:293.0px;height:3.0px;background:#4f5e69"></div><div style="position:absolute;left:1px;width:20px;top:296.0px;height:4.8px;background:#daeefc"></div><div style="position:absolute;left:1px;width:20px;top:300.8px;height:2.0px;background:#7d8c99"></div><div style="position:absolute;left:1px;width:20px;top:302.8px;height:5.9px;background:#daeefc"></div><div style="position:absolute;left:1px;width:20px;top:308.7px;height:2.0px;background:#4f5e69"></div><div style="position:absolute;left:1px;width:20px;top:310.7px;height:2.0px;background:#9aa4b0"></div><div style="position:absolute;left:1px;width:20px;top:312.7px;height:2.0px;background:#4f5e69"></div><div style="position:absolute;left:1px;width:20px;top:314.7px;height:2.0px;background:#9aa4b0"></div><div style="position:absolute;left:1px;width:20px;top:316.7px;height:2.0px;background:#4f5e69"></div><div style="position:absolute;left:1px;width:20px;top:318.7px;height:2.0px;background:#9aa4b0"></div><div style="position:absolute;left:1px;width:20px;top:320.7px;height:2.0px;background:#4f5e69"></div><div style="position:absolute;left:1px;width:20px;top:322.7px;height:2.0px;background:#9aa4b0"></div><div style="position:absolute;left:1px;width:20px;top:324.7px;height:2.0px;background:#4f5e69"></div><div style="position:absolute;left:1px;width:20px;top:326.7px;height:2.0px;background:#9aa4b0"></div><div style="position:absolute;left:1px;width:20px;top:328.7px;height:0.3px;background:#4f5e69"></div><div style="position:absolute;left:1px;width:20px;top:329.0px;height:1.8px;background:#eeeefc"></div><div style="position:absolute;left:1px;width:20px;top:330.8px;height:1.7px;background:#4f5e69"></div><div style="position:absolute;left:1px;width:20px;top:332.5px;height:1.5px;background:#9aa4b0"></div><div style="position:absolute;left:1px;width:20px;top:334.0px;height:2.0px;background:#4f5e69"></div><div style="position:absolute;left:1px;width:20px;top:336.0px;height:1.0px;background:#ffffff"></div><div style="position:absolute;left:1px;width:20px;top:337.0px;height:0.8px;background:#1c2226"></div><div style="position:absolute;left:1px;width:20px;top:337.8px;height:1.7px;background:#7d8c99"></div><div style="position:absolute;left:1px;width:20px;top:339.5px;height:1.8px;background:#4f5e69"></div><div style="position:absolute;left:1px;width:20px;top:341.3px;height:1.7px;background:#9aa4b0"></div><div style="position:absolute;left:1px;width:20px;top:343.0px;height:2.0px;background:#4f5e69"></div></div>
<div id="sbar"><div id="thumb"></div></div>
<div id="focus"></div>
<div id="details">
<div class="dr" style="top:0"><svg class="tri" viewBox="0 0 14 12"><path d="M4.6,3 L9.7,5.85 L4.6,8.7z" fill="#8a8a8a"/></svg><span class="dt">Frame 1: 324 bytes on wire (2592 bits), 324 bytes captured (2592 bits)</span></div>
<div class="dr sel" style="top:12px"><svg class="tri" viewBox="0 0 14 12"><path d="M4.6,3 L9.7,5.85 L4.6,8.7z" fill="#8a8a8a"/></svg><span class="dt">Linux cooked capture</span></div>
<div class="dr" style="top:24px"><svg class="tri" viewBox="0 0 14 12"><path d="M4.6,3 L9.7,5.85 L4.6,8.7z" fill="#8a8a8a"/></svg><span class="dt">Internet Protocol Version 4, Src: 127.0.0.1, Dst: 127.0.0.3</span></div>
<div class="dr" style="top:36px"><svg class="tri" viewBox="0 0 14 12"><path d="M4.6,3 L9.7,5.85 L4.6,8.7z" fill="#8a8a8a"/></svg><span class="dt">Stream Control Transmission Protocol, Src Port: 51688 (51688), Dst Port: 3868 (3868)</span></div>
<div class="dr" style="top:48px"><svg class="tri" viewBox="0 0 14 12"><path d="M4.6,3 L9.7,5.85 L4.6,8.7z" fill="#8a8a8a"/></svg><span class="dt">Diameter Protocol</span></div>
</div>
<div id="hexsep"></div>
<div id="hex">
<div id="hexoff"></div>
<div class="hl" style="left:35px;width:249.5px"></div><div class="hl" style="left:299px;width:88.5px"></div><div class="hx" style="top:1.8px"><span class="off">0000</span><span class="hb">00 00 03 04 00 06 00 00  00 00 00 00 00 00 08 00   ........ ........</span></div>
<div class="hx" style="top:11.8px"><span class="off" style="color:#aaa">0010</span><span class="hb">45 02 01 34 00 00 40 00  40 84 3b 40 7f 00 00 01   E..4..@. @.;@....</span></div>
</div>
<div id="status">
<svg style="position:absolute;left:0;top:0" width="40" height="15" viewBox="0 0 40 15"><defs><radialGradient id="rg" cx="0.4" cy="0.35" r="0.7"><stop offset="0" stop-color="#eba49c"/><stop offset="1" stop-color="#d46a62"/></radialGradient></defs>
<circle cx="11.55" cy="7.4" r="4.4" fill="url(#rg)" stroke="#c45a52" stroke-width="0.5"/>
<rect x="24" y="2.8" width="7" height="8.8" fill="#f4f4f4" stroke="#b8b8b8" stroke-width="0.5"/><rect x="24.2" y="3" width="6.6" height="1.8" fill="#5aa8e4"/>
<path d="M26.4,8.6 L32.3,2.8" stroke="#3a3a3a" stroke-width="1.1"/></svg>
<span class="st" style="left:46.3px">Linux cooked-mode capture (sll), 16 bytes</span>
<div class="ssep" style="left:624.3px"></div>
<span class="st" style="left:631.6px;letter-spacing:-0.18px">Packets: 13011 · Displayed: 13011 (100.0%)</span><span class="st" style="left:782.6px">·</span><span class="st" style="left:789px">Load time: 0:0.706</span>
<div class="ssep" style="left:881.8px"></div>
<span class="st" style="left:888.8px">Profile: Default</span>
</div>
</div>
</body></html>
